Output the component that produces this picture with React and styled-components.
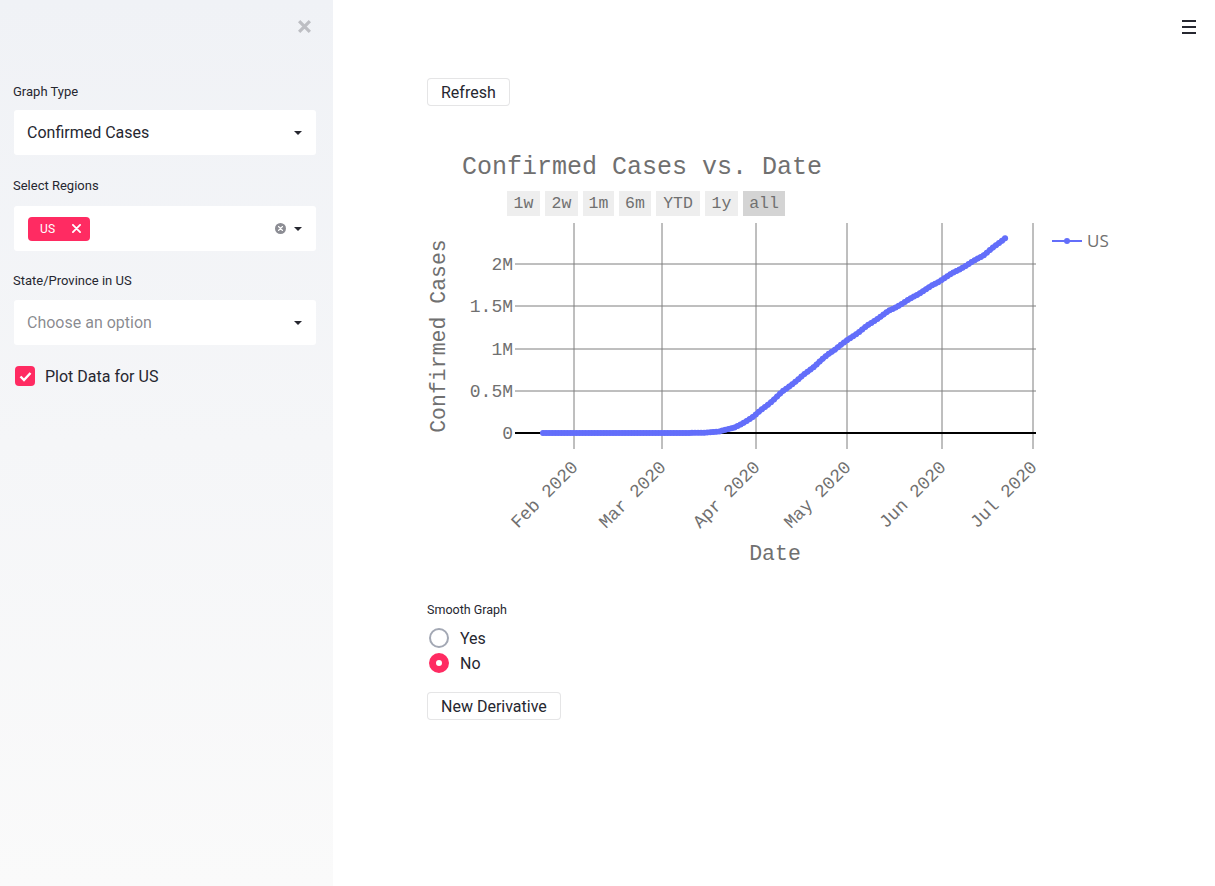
import React from 'react';
import styled, { createGlobalStyle } from 'styled-components';

const GlobalStyle = createGlobalStyle`
  html, body {
    margin: 0;
    padding: 0;
    background: #ffffff;
  }
  body {
    font-family: Roboto, "Noto Sans", sans-serif;
    color: rgb(38, 39, 48);
  }
`;

const Page = styled.div`
  display: flex;
  width: 1215px;
  height: 886px;
  overflow: hidden;
`;

const Sidebar = styled.aside`
  position: relative;
  width: 333px;
  flex: none;
  box-sizing: border-box;
  padding: 82px 17px 0 13px;
  background: linear-gradient(180deg, #f0f2f6 0%, #fafafa 100%);
`;

const CloseButton = styled.button`
  position: absolute;
  top: 17px;
  right: 20px;
  width: 18px;
  height: 18px;
  padding: 0;
  border: none;
  background: none;
  display: flex;
  align-items: center;
  justify-content: center;
  cursor: pointer;
`;

const Label = styled.div`
  font-size: 13px;
  line-height: 20px;
  height: 20px;
  margin-bottom: ${({ $gap }) => $gap || 8}px;
  color: rgb(38, 39, 48);
`;

const SelectBox = styled.div`
  display: flex;
  align-items: center;
  height: 45px;
  margin-left: 1px;
  margin-bottom: ${({ $gap }) => $gap || 21}px;
  box-sizing: border-box;
  padding: 0 14px 0 13px;
  background: #ffffff;
  border-radius: 3px;
  font-size: 16px;
  color: ${({ $placeholder }) => ($placeholder ? 'rgba(38, 39, 48, 0.55)' : 'rgb(38, 39, 48)')};
`;

const SelectValue = styled.div`
  flex: 1;
  display: flex;
  align-items: center;
`;

const Caret = styled.span`
  width: 0;
  height: 0;
  border-left: 4px solid transparent;
  border-right: 4px solid transparent;
  border-top: 4px solid rgb(38, 39, 48);
  margin-left: 8px;
`;

const Tag = styled.span`
  display: inline-flex;
  align-items: center;
  gap: 16px;
  height: 24px;
  margin-left: 1px;
  padding: 0 9px 0 12px;
  background: #ff2b62;
  border-radius: 4px;
  color: #ffffff;
  font-size: 12px;
  letter-spacing: 0.3px;
`;

const ClearIcon = styled.span`
  display: inline-flex;
  align-items: center;
  justify-content: center;
  width: 11px;
  height: 11px;
  border-radius: 50%;
  background: #8c8d94;
`;

const CheckRow = styled.label`
  display: flex;
  align-items: center;
  gap: 10px;
  margin-top: 12px;
  margin-left: 2px;
  font-size: 16px;
`;

const CheckBox = styled.span`
  width: 20px;
  height: 20px;
  border-radius: 4px;
  background: #ff2b62;
  display: flex;
  align-items: center;
  justify-content: center;
`;

const Main = styled.main`
  position: relative;
  flex: 1;
  box-sizing: border-box;
  padding: 78px 0 0 94px;
`;

const Hamburger = styled.button`
  position: absolute;
  top: 20px;
  right: 19px;
  width: 14px;
  height: 14px;
  padding: 0;
  border: none;
  background: none;
  display: flex;
  flex-direction: column;
  justify-content: space-between;
  cursor: pointer;
  span {
    display: block;
    height: 2px;
    background: rgb(38, 39, 48);
  }
`;

const Button = styled.button`
  display: inline-flex;
  align-items: center;
  height: 28px;
  box-sizing: border-box;
  padding: 0 13px;
  border: 1px solid rgba(38, 39, 48, 0.12);
  border-radius: 4px;
  background: #ffffff;
  font-family: inherit;
  font-size: 16px;
  color: rgb(38, 39, 48);
  cursor: pointer;
`;

const Chart = styled.svg`
  display: block;
  margin-top: 24px;
  font-family: "Liberation Mono", "Courier New", monospace;
`;

const SmallLabel = styled.div`
  margin-top: ${({ $top }) => $top || 0}px;
  font-size: 12.5px;
  line-height: 20px;
  color: rgb(38, 39, 48);
`;

const RadioGroup = styled.div`
  display: flex;
  flex-direction: column;
  gap: 5px;
  margin-top: 8px;
`;

const RadioRow = styled.label`
  display: flex;
  align-items: center;
  gap: 11px;
  height: 20px;
  margin-left: 2px;
  font-size: 16px;
`;

const RadioDot = styled.span`
  width: 20px;
  height: 20px;
  box-sizing: border-box;
  border-radius: 50%;
  border: ${({ $checked }) => ($checked ? '7px solid #ff2b62' : '2px solid #a3a8b4')};
  background: #ffffff;
`;

const ButtonRow = styled.div`
  margin-top: 19px;
`;

// approximate cumulative US cases (day offset from Jan 22, value)
const KEY = [
  [0, 1], [39, 75], [48, 1000], [53, 3500], [58, 19000], [63, 65000], [66, 120000],
  [69, 190000], [74, 337000], [79, 496000], [84, 636000], [89, 784000],
  [94, 938000], [99, 1070000], [104, 1200000], [109, 1330000], [114, 1450000],
  [119, 1550000], [124, 1660000], [130, 1790000], [135, 1900000],
  [140, 2000000], [145, 2110000], [150, 2250000], [152, 2310000],
];

const series = [];
for (let d = 0; d <= 152; d += 1) {
  let i = 0;
  while (KEY[i + 1][0] < d) i += 1;
  const [d0, v0] = KEY[i];
  const [d1, v1] = KEY[i + 1];
  const t = (d - d0) / (d1 - d0);
  const wobble = d > 70 ? Math.sin(d * 0.9) * 3500 : 0;
  series.push([d, v0 + (v1 - v0) * t + wobble]);
}

const px = (d) => 543 + d * 3.04;
const py = (v) => 433 - (v / 1000000) * 84.4;

const Y_TICKS = [
  ['2M', 264], ['1.5M', 306], ['1M', 349], ['0.5M', 391], ['0', 433],
];
const X_TICKS = [
  ['Feb 2020', 574], ['Mar 2020', 662], ['Apr 2020', 756],
  ['May 2020', 847], ['Jun 2020', 942], ['Jul 2020', 1033],
];
const RANGES = [
  ['1w', 507, 33], ['2w', 545, 33], ['1m', 583, 31], ['6m', 619, 32],
  ['YTD', 656, 44], ['1y', 705, 33], ['all', 743, 42],
];

const TEXT = '#707070';

const CasesChart = () => {
  const points = series.map(([d, v]) => `${px(d).toFixed(1)},${py(v).toFixed(1)}`).join(' ');
  return (
    <Chart width="700" height="450" viewBox="427 130 700 450">
      <text x="462" y="174" fontSize="25" fill={TEXT}>Confirmed Cases vs. Date</text>
      {RANGES.map(([label, x, w]) => (
        <g key={label}>
          <rect x={x} y="191" width={w} height="25" fill={label === 'all' ? '#d4d4d4' : '#eeeeee'} />
          <text x={x + w / 2} y="208" fontSize="16.5" fill={TEXT} textAnchor="middle">{label}</text>
        </g>
      ))}
      {X_TICKS.map(([, x]) => (
        <line key={x} x1={x} x2={x} y1="223" y2="449" stroke="#7f7f7f" strokeWidth="1" />
      ))}
      {Y_TICKS.slice(0, 4).map(([, y]) => (
        <line key={y} x1="515" x2="1036" y1={y} y2={y} stroke="#7f7f7f" strokeWidth="1" />
      ))}
      <line x1="515" x2="1036" y1="433" y2="433" stroke="#000" strokeWidth="2" />
      {Y_TICKS.map(([label, y]) => (
        <text key={label} x="513" y={y + 6} fontSize="18" fill={TEXT} textAnchor="end">{label}</text>
      ))}
      {X_TICKS.map(([label, x]) => (
        <text
          key={label}
          x={x + 5}
          y="468"
          fontSize="18"
          fill={TEXT}
          textAnchor="end"
          transform={`rotate(-45 ${x + 5} 468)`}
        >
          {label}
        </text>
      ))}
      <text x="775" y="560" fontSize="21.5" fill={TEXT} textAnchor="middle">Date</text>
      <text
        x="445"
        y="336"
        fontSize="21.5"
        fill={TEXT}
        textAnchor="middle"
        transform="rotate(-90 445 336)"
      >
        Confirmed Cases
      </text>
      <polyline
        points={points}
        fill="none"
        stroke="#636efa"
        strokeWidth="5"
        strokeLinejoin="round"
        strokeLinecap="round"
      />
      {series.map(([d, v]) => (
        <circle key={d} cx={px(d)} cy={py(v)} r="3" fill="#636efa" />
      ))}
      <line x1="1052" x2="1082" y1="241" y2="241" stroke="#636efa" strokeWidth="2" />
      <circle cx="1067" cy="241" r="3" fill="#636efa" />
      <text x="1087" y="247" fontSize="17" fill={TEXT} fontFamily='"Open Sans", sans-serif'>US</text>
    </Chart>
  );
};

const SmallX = ({ size = 8, color = '#fff', width = 1.8 }) => (
  <svg width={size} height={size} viewBox="0 0 10 10">
    <path d="M1 1 L9 9 M9 1 L1 9" stroke={color} strokeWidth={width} strokeLinecap="round" />
  </svg>
);

const App = () => (
  <Page>
    <GlobalStyle />
    <Sidebar>
      <CloseButton aria-label="Close sidebar">
        <svg width="15" height="15" viewBox="0 0 14 14">
          <path d="M2 2 L12 12 M12 2 L2 12" stroke="#bdbec3" strokeWidth="3" />
        </svg>
      </CloseButton>
      <Label>Graph Type</Label>
      <SelectBox>
        <SelectValue>Confirmed Cases</SelectValue>
        <Caret />
      </SelectBox>
      <Label $gap={10}>Select Regions</Label>
      <SelectBox $gap={20}>
        <SelectValue>
          <Tag>
            US
            <SmallX size={9} width={2} />
          </Tag>
        </SelectValue>
        <ClearIcon>
          <SmallX size={5} width={2.2} />
        </ClearIcon>
        <Caret />
      </SelectBox>
      <Label $gap={9}>State/Province in US</Label>
      <SelectBox $placeholder>
        <SelectValue>Choose an option</SelectValue>
        <Caret />
      </SelectBox>
      <CheckRow>
        <CheckBox>
          <svg width="13" height="11" viewBox="0 0 13 11">
            <path d="M1.5 5.5 L5 9 L11.5 2" fill="none" stroke="#fff" strokeWidth="2.4" />
          </svg>
        </CheckBox>
        Plot Data for US
      </CheckRow>
    </Sidebar>
    <Main>
      <Hamburger aria-label="Menu">
        <span />
        <span />
        <span />
      </Hamburger>
      <Button>Refresh</Button>
      <CasesChart />
      <SmallLabel $top={20}>Smooth Graph</SmallLabel>
      <RadioGroup>
        <RadioRow>
          <RadioDot />
          Yes
        </RadioRow>
        <RadioRow>
          <RadioDot $checked />
          No
        </RadioRow>
      </RadioGroup>
      <ButtonRow>
        <Button>New Derivative</Button>
      </ButtonRow>
    </Main>
  </Page>
);

export default App;
